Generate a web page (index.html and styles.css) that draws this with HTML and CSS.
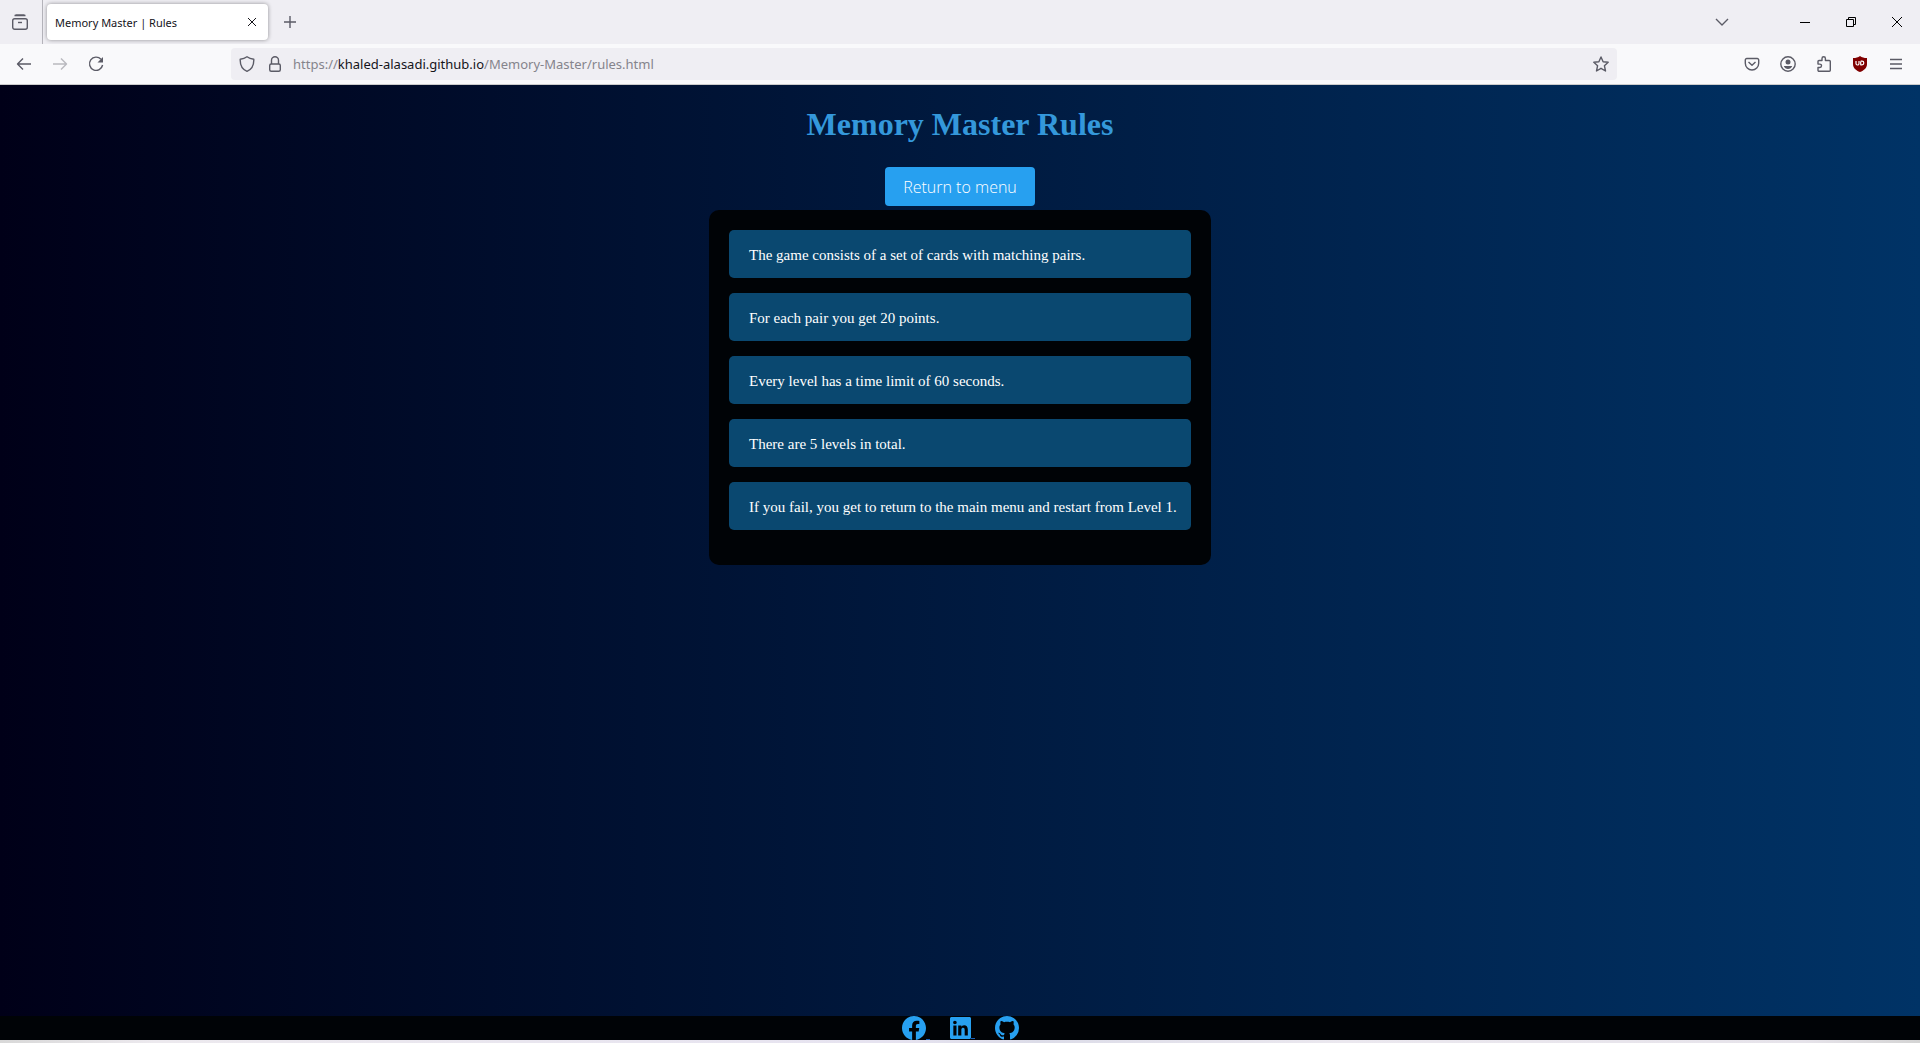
FILE: index.html
```html
<!DOCTYPE html>
<html lang="en">
<head>
<meta charset="utf-8">
<title>Memory Master | Rules</title>
<link rel="stylesheet" href="styles.css">
</head>
<body>
<div class="browser">
  <div class="tabbar">
    <button class="icon-btn view-btn" aria-label="Recent browsing"><svg width="16" height="16" viewBox="0 0 16 16"><path d="M3.500 1h9M2.500 1.500h11"/><rect x=".7" y="4.700" width="14.600" height="10.600" rx="2"/><path d="M6 8.500h4"/></svg></button>
    <div class="tab"><span>Memory Master | Rules</span><button class="icon-btn close-tab" aria-label="Close tab"><svg width="10" height="10" viewBox="0 0 10 10"><path d="M1 1l8 8M9 1L1 9"/></svg></button></div>
    <button class="icon-btn new-tab" aria-label="New tab"><svg width="12" height="12" viewBox="0 0 12 12"><path d="M6 0v12M0 6h12"/></svg></button>
    <div class="window-controls">
      <button class="icon-btn list-tabs" aria-label="List all tabs"><svg width="14" height="8" viewBox="0 0 14 8"><path d="M1 1l6 6 6-6"/></svg></button>
      <button class="icon-btn" aria-label="Minimize"><svg class="sharp" width="10" height="10" viewBox="0 0 10 10"><path d="M0 5.500h10"/></svg></button>
      <button class="icon-btn" aria-label="Restore"><svg class="sharp" width="10" height="10" viewBox="0 0 10 10"><path d="M.5 2.500h7v7h-7zM2.500 2.500v-2h7v7h-2"/></svg></button>
      <button class="icon-btn" aria-label="Close"><svg class="sharp" width="10" height="10" viewBox="0 0 10 10"><path d="M0 0l10 10M10 0L0 10"/></svg></button>
    </div>
  </div>
  <div class="toolbar">
    <div class="nav">
      <button class="icon-btn" aria-label="Back"><svg width="16" height="16" viewBox="0 0 16 16"><path d="M15 8H1.500M7 2.500L1.500 8 7 13.500"/></svg></button>
      <button class="icon-btn" aria-label="Forward" disabled><svg width="16" height="16" viewBox="0 0 16 16"><path d="M1 8h13.500M9 2.500L14.500 8 9 13.500"/></svg></button>
      <button class="icon-btn" aria-label="Reload"><svg width="16" height="16" viewBox="0 0 16 16"><path d="M13 3.300A6.600 6.600 0 1 0 14.600 9"/><path class="solid" d="M15 1v5.500H9.500z"/></svg></button>
    </div>
    <div class="urlbar">
      <svg width="16" height="16" viewBox="0 0 16 16"><path d="M8 .8C6 2.300 3.500 3 1.200 3.200 1 9 3.500 13.500 8 15.300c4.500-1.800 7-6.300 6.800-12.100C12.500 3 10 2.300 8 .8z"/></svg>
      <svg width="16" height="16" viewBox="0 0 16 16"><rect x="2.700" y="8" width="10.600" height="7.300" rx="1.500"/><path d="M4.500 8V4.200a3.500 3.500 0 0 1 7 0V8"/></svg>
      <div class="url">https://<b>khaled-alasadi.github.io</b>/Memory-Master/rules.html</div>
      <button class="icon-btn star" aria-label="Bookmark"><svg width="16" height="16" viewBox="0 0 16 16"><path d="M8 1l2.100 4.700 5.100.5-3.800 3.500 1.100 5.300L8 12.300 3.500 15l1.100-5.300L.8 6.200l5.100-.5z"/></svg></button>
    </div>
    <div class="tools">
      <button class="icon-btn" aria-label="Pocket"><svg width="16" height="16" viewBox="0 0 16 16"><path d="M2.800 2.500h10.400a1.500 1.500 0 0 1 1.500 1.500v3.300a6.700 6.700 0 0 1-13.400 0V4a1.500 1.500 0 0 1 1.500-1.500z"/><path d="M4.500 6L8 9.200 11.500 6"/></svg></button>
      <button class="icon-btn" aria-label="Account"><svg width="16" height="16" viewBox="0 0 16 16"><circle cx="8" cy="8" r="7.200"/><circle class="solid" cx="8" cy="6" r="2.500"/><path class="solid" d="M3.800 10h8.400c-.6 2-2.300 3-4.200 3s-3.600-1-4.200-3z"/></svg></button>
      <button class="icon-btn" aria-label="Extensions"><svg width="16" height="16" viewBox="0 0 16 16"><path d="M6 4.500V2.500a1.700 1.700 0 0 1 3.400 0v2h3.900a1 1 0 0 1 1 1V14.300a1 1 0 0 1-1 1H3a1 1 0 0 1-1-1v-2.800h1.800a1.700 1.700 0 0 0 0-3.400H2V5.500a1 1 0 0 1 1-1z"/></svg></button>
      <button class="icon-btn" aria-label="uBlock"><svg class="shield" width="16" height="16" viewBox="0 0 16 16"><path class="shield-body" d="M8 0c2 1.500 4 2 7 2v6c0 4-3 6.500-7 8-4-1.500-7-4-7-8V2c3 0 5-.5 7-2z"/><path class="shield-mark" d="M4 5v2.500a1.500 1.500 0 0 0 3 0V5M8.700 5.500v3.300H10a1.800 1.800 0 0 0 0-3.600H8.700"/></svg></button>
      <button class="icon-btn" aria-label="Menu"><svg width="16" height="16" viewBox="0 0 16 16"><path d="M2 3.500h12M2 8h12M2 12.500h12"/></svg></button>
    </div>
  </div>
  <div class="page">
    <main>
      <h1>Memory Master Rules</h1>
      <button class="return">Return to menu</button>
      <ul class="rules">
        <li>The game consists of a set of cards with matching pairs.</li>
        <li>For each pair you get 20 points.</li>
        <li>Every level has a time limit of 60 seconds.</li>
        <li>There are 5 levels in total.</li>
        <li>If you fail, you get to return to the main menu and restart from Level 1.</li>
      </ul>
    </main>
    <footer>
      <a href="#" aria-label="Facebook"><svg width="24" height="24" viewBox="0 0 16 16"><path d="M16 8.049c0-4.446-3.582-8.050-8-8.050C3.580 0-.002 3.603-.002 8.050c0 4.017 2.926 7.347 6.750 7.951v-5.625h-2.030V8.050H6.750V6.275c0-2.017 1.195-3.131 3.022-3.131.876 0 1.791.157 1.791.157v1.980h-1.009c-.993 0-1.303.621-1.303 1.258v1.510h2.218l-.354 2.326H9.250V16c3.824-.604 6.750-3.934 6.750-7.951"/></svg></a>
      <a href="#" aria-label="LinkedIn"><svg width="21" height="22" viewBox="0 0 16 16" preserveAspectRatio="none"><path d="M0 1.146C0 .513.526 0 1.175 0h13.650C15.474 0 16 .513 16 1.146v13.708c0 .633-.526 1.146-1.175 1.146H1.175C.526 16 0 15.487 0 14.854zm4.943 12.248V6.169H2.542v7.225zm-1.200-8.212c.837 0 1.358-.554 1.358-1.248-.015-.709-.52-1.248-1.342-1.248S2.400 3.226 2.400 3.934c0 .694.521 1.248 1.327 1.248zm4.908 8.212V9.359c0-.216.016-.432.080-.586.173-.431.568-.878 1.232-.878.869 0 1.216.662 1.216 1.634v3.865h2.401V9.250c0-2.220-1.184-3.252-2.764-3.252-1.274 0-1.845.7-2.165 1.193V6.169H6.250c.03.678 0 7.225 0 7.225z"/></svg></a>
      <a href="#" aria-label="GitHub"><svg width="24" height="24" viewBox="0 0 16 16"><path d="M8 0C3.580 0 0 3.580 0 8c0 3.540 2.290 6.530 5.470 7.590.4.070.55-.17.55-.38 0-.19-.01-.82-.01-1.490-2.010.37-2.530-.49-2.690-.94-.09-.23-.48-.94-.82-1.130-.28-.15-.68-.52-.01-.53.63-.01 1.080.58 1.230.82.72 1.210 1.870.87 2.330.66.07-.52.28-.87.51-1.070-1.780-.2-3.640-.89-3.640-3.950 0-.87.31-1.590.82-2.150-.08-.2-.36-1.020.08-2.120 0 0 .67-.21 2.200.82.64-.18 1.320-.27 2-.27s1.360.09 2 .27c1.530-1.040 2.200-.82 2.200-.82.44 1.100.16 1.920.08 2.120.51.56.82 1.270.82 2.150 0 3.070-1.870 3.750-3.650 3.950.29.25.54.73.54 1.480 0 1.070-.01 1.930-.01 2.200 0 .21.15.46.55.38A8.010 8.010 0 0 0 16 8c0-4.420-3.580-8-8-8"/></svg></a>
    </footer>
  </div>
  <div class="edge"></div>
</div>
</body>
</html>
```
FILE: styles.css
```css
* { box-sizing: border-box; }
body { margin: 0; }
button { font: inherit; border: 0; background: none; padding: 0; color: inherit; }
.browser { display: flex; flex-direction: column; min-height: 100vh; font-family: "Noto Sans", sans-serif; font-size: 11px; color: #15141a; }
.browser svg { display: block; fill: none; stroke: #5b5b66; stroke-width: 1.4; flex: none; stroke-linejoin: round; }
.icon-btn { display: flex; align-items: center; justify-content: center; flex: none; }
.icon-btn:disabled { opacity: .4; }
.browser .solid { fill: #5b5b66; stroke: none; }
.browser .sharp { stroke: #000; stroke-width: 1; }

.tabbar { display: flex; align-items: center; height: 44px; background: #efeef3; }
.view-btn { width: 43px; height: 44px; padding-right: 3px; border-right: 1px solid #b4b3ba; }
.tab { display: flex; align-items: center; justify-content: space-between; width: 221px; height: 36px; margin-left: 4px; padding: 0 11px 0 8px; background: #fff; border-radius: 4px; box-shadow: 0 0 4px rgba(0, 0, 0, .4); }
.browser .close-tab svg { stroke: #15141a; stroke-width: 1; }
.new-tab { width: 43px; height: 44px; }
.window-controls { display: flex; margin-left: auto; }
.window-controls .icon-btn { width: 46px; height: 44px; }
.window-controls .list-tabs { width: 40px; margin-right: 40px; }

.toolbar { display: grid; grid-template-columns: 231px minmax(0, 1386px) 1fr; align-items: center; height: 41px; background: #f9f9fb; border-bottom: 1px solid #ccc; }
.nav { display: flex; gap: 20px; padding-left: 16px; }
.urlbar { display: flex; align-items: center; gap: 12px; height: 32px; padding: 0 8px; background: #efeef3; border-radius: 4px; }
.url { flex: 1; margin-left: -2px; font-size: 13px; color: #85848c; white-space: nowrap; }
.url b { font-weight: 400; color: #15141a; }
.tools { display: flex; justify-content: flex-end; gap: 20px; padding-right: 16px; }
.browser .shield { stroke: none; }
.shield-body { fill: #800000; }
.shield-mark { stroke: #fff; stroke-width: 1.200; }

.page { flex: 1; display: flex; flex-direction: column; background: linear-gradient(to right, #000018, #003366); font-family: "Liberation Serif", serif; font-size: 15px; }
main { flex: 1; display: flex; flex-direction: column; align-items: center; }
h1 { margin: 21px 0 24px; font-size: 32px; line-height: 37px; color: #3498db; }
.return { width: 150px; height: 39px; border-radius: 4px; background: #27a0f0; color: #fff; font-family: "Open Sans", sans-serif; font-weight: 300; font-size: 16px; }
.rules { width: 100%; max-width: 502px; margin: 4px 0 0; padding: 20px; list-style: none; background: #000306; border-radius: 10px; color: #fff; }
.rules li { margin-bottom: 15px; padding: 16px 12px 14px 20px; line-height: 18px; background: #0a4870; border-radius: 5px; }
footer { display: flex; align-items: center; justify-content: center; gap: 24px; height: 24px; background: #000306; }
footer a { position: relative; }
footer a:not(:last-child)::after { content: ""; position: absolute; left: 100%; bottom: 0; width: 4px; height: 1px; background: #1a5fb4; }
.browser footer svg { fill: #27a0f0; stroke: none; }
.edge { height: 3px; background: linear-gradient(to right, #d8d8d8, #ece9ee 8%, #e6e3f0 46%, #dcdce8 54%, #ebe8ef 70%, #e6e3ea 94%, #d4d4d4); }
```
